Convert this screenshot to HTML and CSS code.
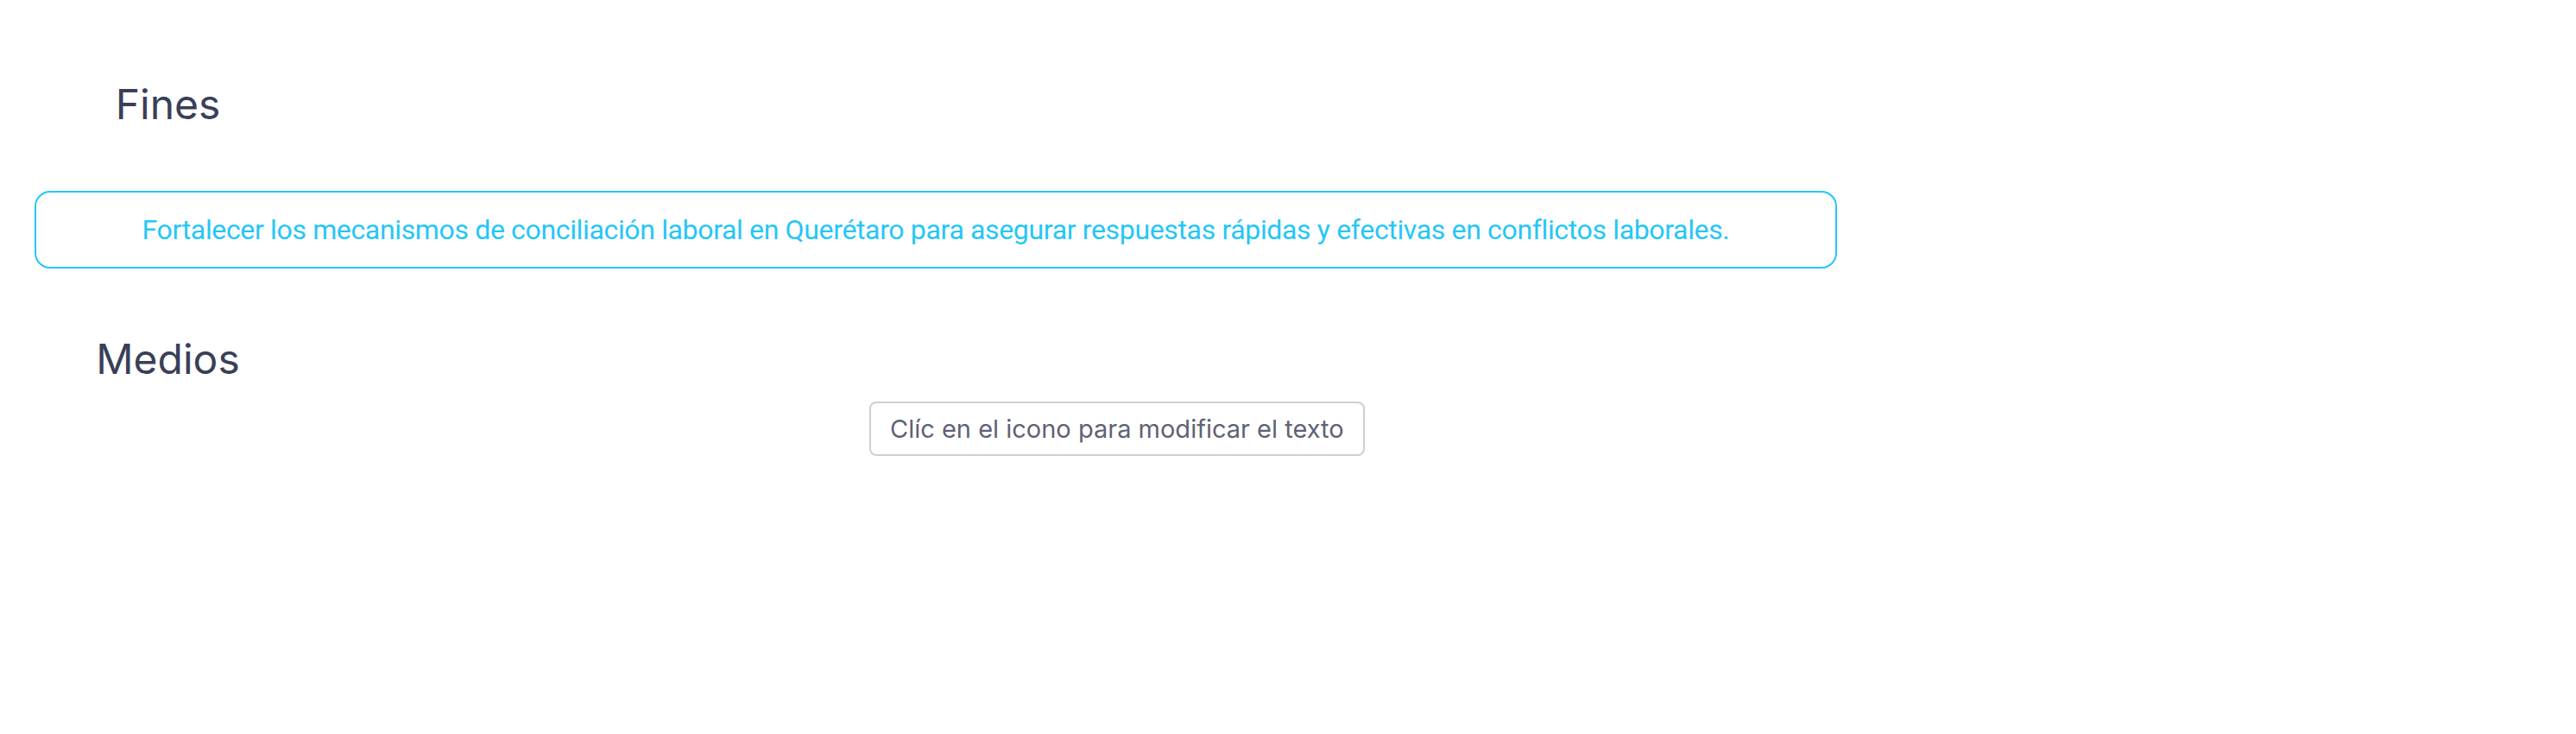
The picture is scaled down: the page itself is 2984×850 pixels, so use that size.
FILE: index.html
```html
<!DOCTYPE html>
<html lang="es">
<head>
    <meta charset="UTF-8">
    <meta name="viewport" content="width=device-width, initial-scale=1.0">
    <title>Fines y Medios</title>
    <link rel="stylesheet" href="styles.css">
</head>
<body>
    <div class="page">
        <h2 class="section-title">Fines</h2>
        <div class="fin-box">
            <p>Fortalecer los mecanismos de conciliación laboral en Querétaro para asegurar respuestas rápidas y efectivas en conflictos laborales.</p>
        </div>

        <h2 class="section-title medios">Medios</h2>
        <div class="hint-row">
            <span class="hint">Clíc en el icono para modificar el texto</span>
        </div>
    </div>
</body>
</html>
```

FILE: styles.css
```css
body {
    margin: 0;
    font-family: Inter, "Noto Sans", Arial, sans-serif;
    background-color: #ffffff;
}
.page {
    padding-top: 91px;
}
.section-title {
    width: 389px;
    margin: 0;
    text-align: center;
    font-size: 48px;
    font-weight: 400;
    line-height: 60px;
    color: #3a3f58;
}
.fin-box {
    box-sizing: border-box;
    width: 2088px;
    height: 90px;
    margin: 70px 0 0 40px;
    border: 2px solid #26c6f7;
    border-radius: 18px;
    display: flex;
    justify-content: center;
    align-items: center;
}
.fin-box p {
    margin: 0;
    font-family: Roboto, Inter, sans-serif;
    font-size: 32px;
    letter-spacing: -0.35px;
    color: #26c6f7;
}
.medios {
    margin-top: 75px;
}
.hint-row {
    display: flex;
    margin: 19px 0 0 1007px;
}
.hint {
    box-sizing: border-box;
    height: 63px;
    padding: 0 22px;
    border: 2px solid #cfcfd3;
    border-radius: 8px;
    display: flex;
    align-items: center;
    font-size: 29px;
    color: #5f6276;
}
```
